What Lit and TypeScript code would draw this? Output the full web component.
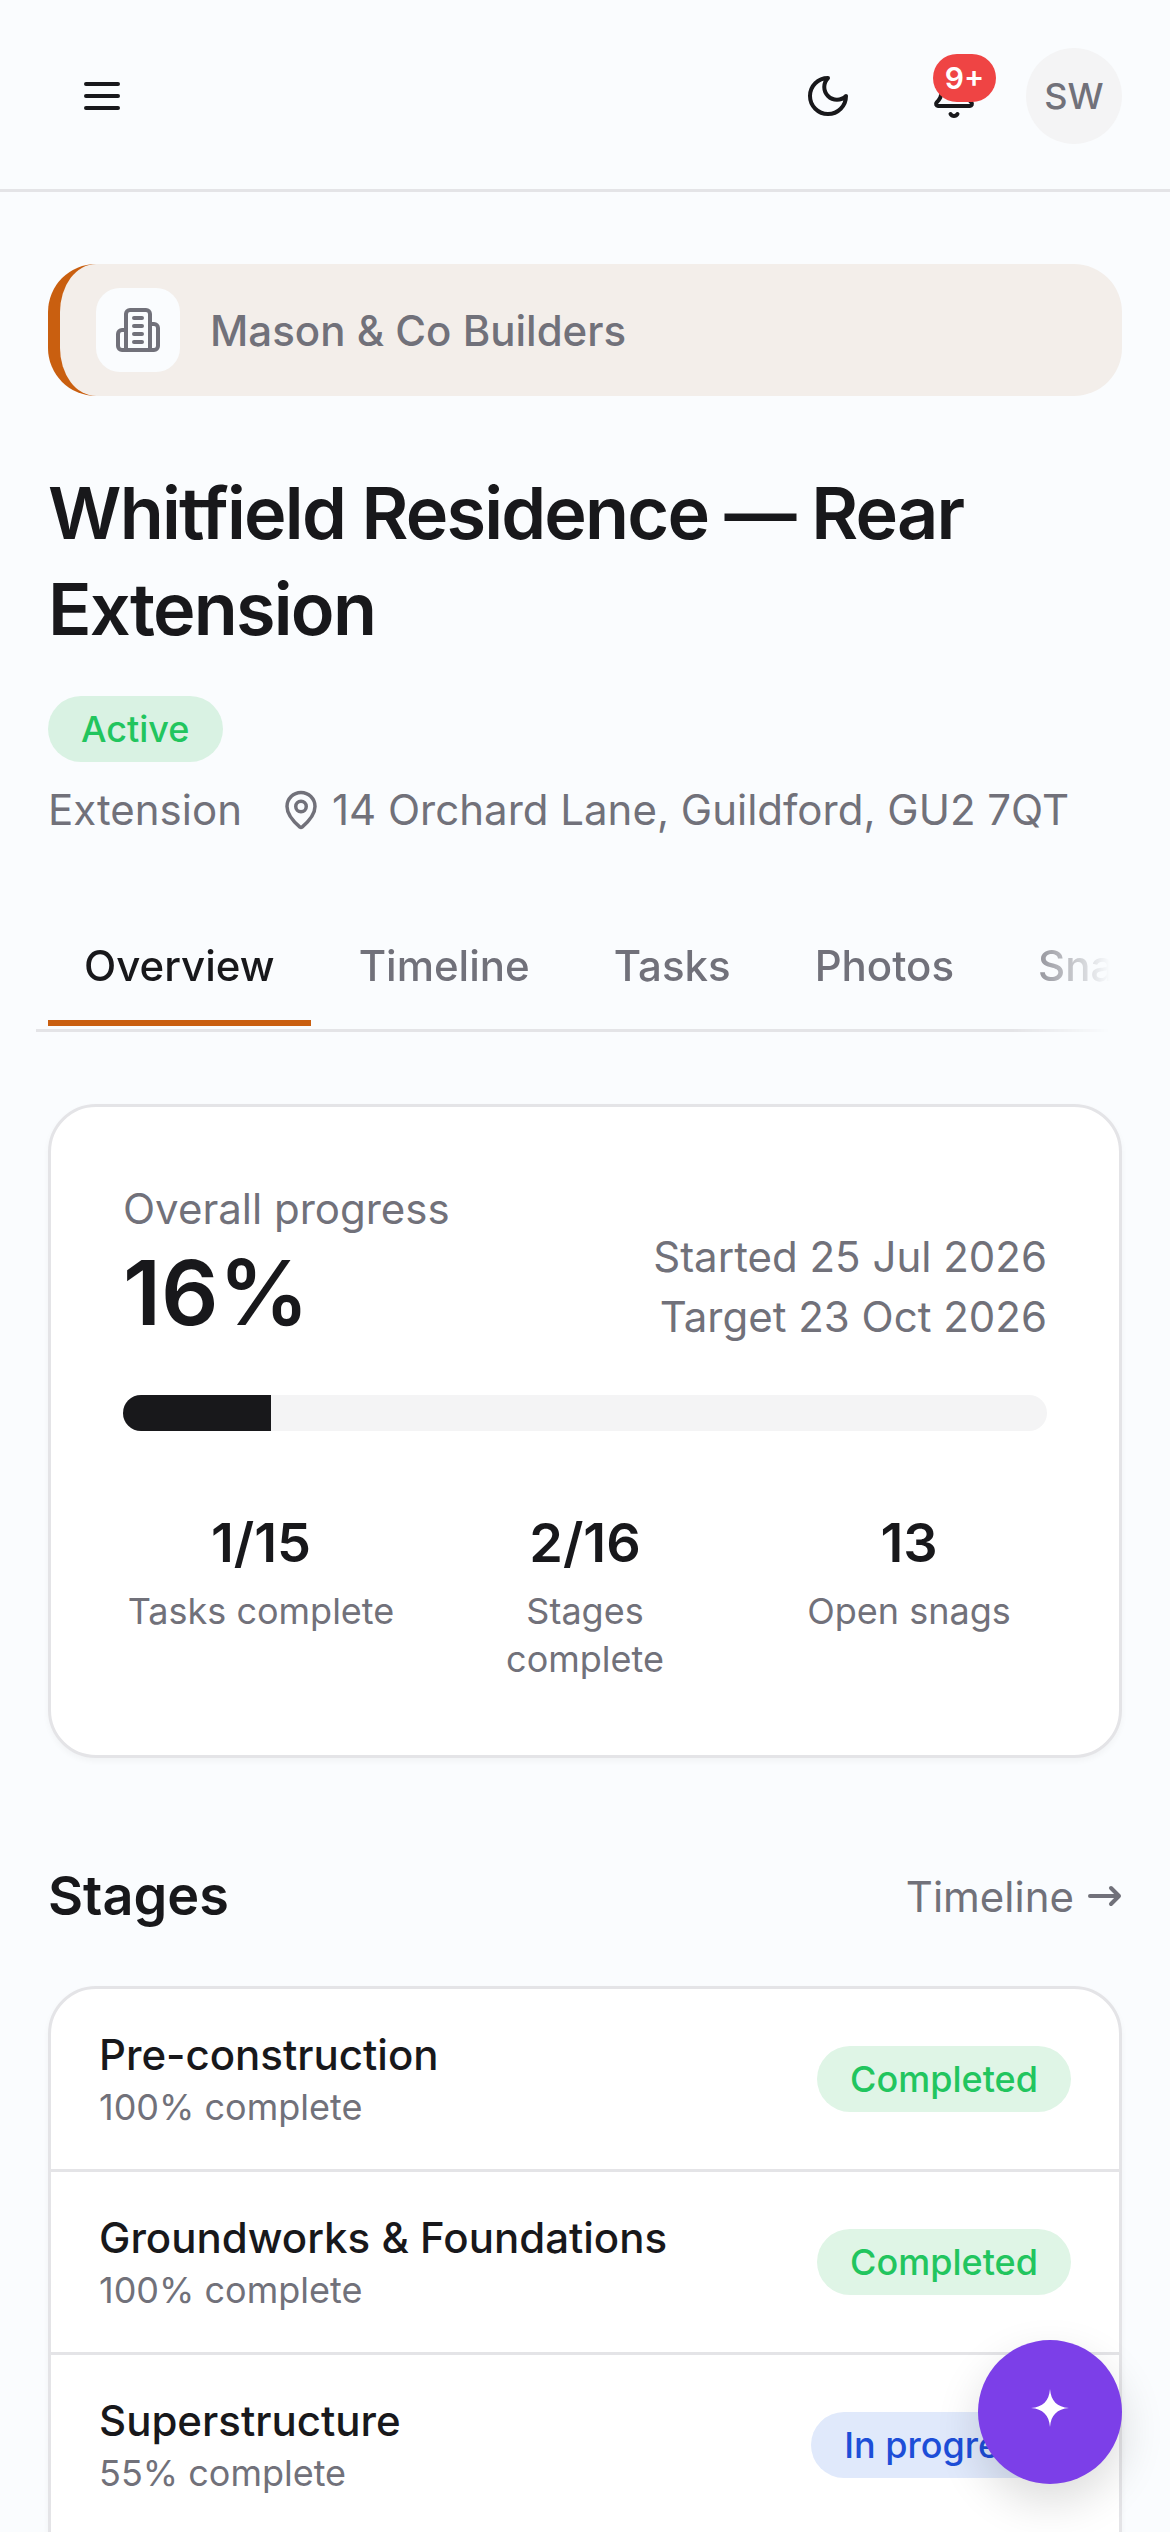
import { LitElement, html, css, svg } from "lit";
import { customElement } from "lit/decorators.js";

const icon = (size: number, sw: number, body: unknown) => html`<svg class="ic" width=${size} height=${size} viewBox="0 0 24 24" fill="none" stroke="currentColor" stroke-width=${sw} stroke-linecap="round" stroke-linejoin="round">${body}</svg>`;

const stages = [
  { name: "Pre-construction", pct: 100, status: "Completed", kind: "done" },
  { name: "Groundworks & Foundations", pct: 100, status: "Completed", kind: "done" },
  { name: "Superstructure", pct: 55, status: "In progress", kind: "prog" },
];

@customElement("app-root")
export class AppRoot extends LitElement {
  static styles = css`
    :host { display: block; position: relative; height: 2532px; overflow: hidden; background: #fafcfe; color: #18181b; font-family: Inter, "Liberation Sans", sans-serif; }
    * { box-sizing: border-box; }
    .ic { display: block; flex: none; }
    header { display: flex; align-items: center; padding: 48px 48px 45px; border-bottom: 3px solid #e4e4e7; height: 192px; }
    .btn { position: relative; width: 108px; height: 108px; margin: -6px 0; display: flex; align-items: center; justify-content: center; color: #18181b; }
    .right { margin-left: auto; display: flex; align-items: center; gap: 18px; }
    .count { position: absolute; top: 12px; right: 12px; width: 63px; height: 48px; border-radius: 24px; background: #ef4444; color: #fff; font-size: 30px; font-weight: 600; display: flex; align-items: center; justify-content: center; }
    .avatar { width: 96px; height: 96px; border-radius: 50%; background: #f4f4f5; color: #71717a; font-size: 36px; font-weight: 500; display: flex; align-items: center; justify-content: center; }
    main { padding: 72px 48px 0; }
    .org { height: 132px; border-left: 12px solid #c95f10; border-radius: 48px; background: #f3eeea; display: flex; align-items: center; gap: 30px; padding-left: 36px; color: #71717a; font-size: 42px; font-weight: 500; }
    .org-ic { width: 84px; height: 84px; border-radius: 24px; background: #fafcfe; display: flex; align-items: center; justify-content: center; }
    h1 { margin: 69px 0 39px; font-size: 72px; line-height: 96px; font-weight: 600; letter-spacing: -1.8px; }
    .pill { display: inline-flex; align-items: center; height: 66px; padding: 0 33px; border-radius: 33px; font-size: 36px; font-weight: 500; white-space: nowrap; }
    .done { background: #dff5e6; color: #22c55e; }
    .active { background: #d9f2e3; color: #22c55e; }
    .prog { background: #e0e9fb; color: #1d4ed8; }
    .meta { display: flex; align-items: center; margin-top: 18px; gap: 38px; font-size: 42px; line-height: 60px; color: #71717a; }
    .loc { display: flex; align-items: center; gap: 10px; }
    .tabs { margin: 90px 0 0 -12px; padding: 0 12px 3px; display: flex; gap: 12px; overflow: hidden; border-bottom: 3px solid #e4e4e7; -webkit-mask-image: linear-gradient(to right, #000 calc(100% - 110px), transparent calc(100% - 12px)); mask-image: linear-gradient(to right, #000 calc(100% - 110px), transparent calc(100% - 12px)); }
    .tab { padding: 0 36px; height: 96px; line-height: 72px; font-size: 42px; font-weight: 500; color: #71717a; border-bottom: 6px solid transparent; white-space: nowrap; flex: none; }
    .tab.on { color: #18181b; border-bottom-color: #c95f10; }
    .card { background: #fff; border: 3px solid #e4e4e7; border-radius: 48px; box-shadow: 0 3px 6px rgba(0,0,0,.04); }
    .overall { margin-top: 72px; padding: 72px; height: 654px; }
    .top { display: flex; justify-content: space-between; align-items: flex-end; }
    .lbl { font-size: 42px; line-height: 60px; color: #71717a; }
    .big { font-size: 90px; line-height: 108px; font-weight: 600; }
    .dates { text-align: right; font-size: 42px; line-height: 60px; color: #71717a; }
    .bar { margin-top: 48px; height: 36px; border-radius: 18px; background: #f4f4f5; overflow: hidden; }
    .fill { height: 100%; background: #18181b; }
    .stats { margin-top: 70px; display: grid; grid-template-columns: repeat(3, 1fr); gap: 48px; text-align: center; }
    .num { font-size: 54px; line-height: 84px; font-weight: 600; margin-bottom: 2px; }
    .cap { font-size: 36px; line-height: 48px; color: #71717a; }
    .sec { margin-top: 102px; display: flex; align-items: center; justify-content: space-between; }
    h2 { margin: 0; font-size: 54px; line-height: 72px; font-weight: 600; }
    .link { display: flex; align-items: center; gap: 14px; font-size: 42px; color: #71717a; }
    .list { margin-top: 54px; height: 640px; }
    .row { height: 183px; padding: 0 48px; display: flex; align-items: center; justify-content: space-between; border-top: 3px solid #e4e4e7; }
    .row:first-child { border-top: 0; height: 180px; }
    .txt { padding-top: 3px; }
    .name { font-size: 42px; line-height: 54px; font-weight: 500; }
    .sub { font-size: 36px; line-height: 51px; color: #71717a; }
    .fab { position: absolute; right: 48px; bottom: 48px; width: 144px; height: 144px; border-radius: 50%; background: #7c3fe8; display: flex; align-items: center; justify-content: center; box-shadow: 0 18px 45px rgba(0,0,0,.14); }
    .star { margin-top: -8px; }
  `;

  render() {
    return html`
      <header>
        <div class="btn">${icon(48, 2, svg`<path d="M4 6h16M4 12h16M4 18h16"/>`)}</div>
        <div class="right">
          <div class="btn">${icon(48, 2, svg`<path d="M12 3a6 6 0 0 0 9 9 9 9 0 1 1-9-9Z"/>`)}</div>
          <div class="btn">${icon(48, 2, svg`<path d="M10.268 21a2 2 0 0 0 3.464 0"/><path d="M3.262 15.326A1 1 0 0 0 4 17h16a1 1 0 0 0 .74-1.673C19.41 13.956 18 12.499 18 8A6 6 0 0 0 6 8c0 4.499-1.411 5.956-2.738 7.326"/>`)}<span class="count">9+</span></div>
          <div class="avatar">SW</div>
        </div>
      </header>
      <main>
        <div class="org">
          <div class="org-ic">${icon(48, 2, svg`<path d="M6 22V4a2 2 0 0 1 2-2h8a2 2 0 0 1 2 2v18Z"/><path d="M6 12H4a2 2 0 0 0-2 2v6a2 2 0 0 0 2 2h2"/><path d="M18 9h2a2 2 0 0 1 2 2v9a2 2 0 0 1-2 2h-2"/><path d="M10 6h4M10 10h4M10 14h4M10 18h4"/>`)}</div>
          <span>Mason &amp; Co Builders</span>
        </div>
        <h1>Whitfield Residence — Rear Extension</h1>
        <span class="pill active">Active</span>
        <div class="meta">
          <span>Extension</span>
          <span class="loc">${icon(42, 2, svg`<path d="M20 10c0 4.993-5.539 10.193-7.399 11.799a1 1 0 0 1-1.202 0C9.539 20.193 4 14.993 4 10a8 8 0 0 1 16 0"/><circle cx="12" cy="10" r="3"/>`)}14 Orchard Lane, Guildford, GU2 7QT</span>
        </div>
        <div class="tabs">
          ${["Overview", "Timeline", "Tasks", "Photos", "Snags"].map((t, i) => html`<div class="tab ${i === 0 ? "on" : ""}">${t}</div>`)}
        </div>
        <div class="card overall">
          <div class="top">
            <div><div class="lbl">Overall progress</div><div class="big">16%</div></div>
            <div class="dates"><div>Started 25 Jul 2026</div><div>Target 23 Oct 2026</div></div>
          </div>
          <div class="bar"><div class="fill" style="width:16%"></div></div>
          <div class="stats">
            <div><div class="num">1/15</div><div class="cap">Tasks complete</div></div>
            <div><div class="num">2/16</div><div class="cap">Stages complete</div></div>
            <div><div class="num">13</div><div class="cap">Open snags</div></div>
          </div>
        </div>
        <div class="sec"><h2>Stages</h2><span class="link">Timeline<svg class="ic" width="34" height="22" viewBox="0 0 34 22" fill="none" stroke="currentColor" stroke-width="4" stroke-linecap="round" stroke-linejoin="round"><path d="M2 11H31M23 3l8 8-8 8"/></svg></span></div>
        <div class="card list">
          ${stages.map((s) => html`<div class="row"><div class="txt"><div class="name">${s.name}</div><div class="sub">${s.pct}% complete</div></div><span class="pill ${s.kind}">${s.status}</span></div>`)}
        </div>
      </main>
      <div class="fab"><svg class="star" width="38" height="38" viewBox="0 0 38 38" fill="#fff"><path d="M19 0C20 12 26 18 38 19C26 20 20 26 19 38C18 26 12 20 0 19C12 18 18 12 19 0Z"/></svg></div>
    `;
  }
}
